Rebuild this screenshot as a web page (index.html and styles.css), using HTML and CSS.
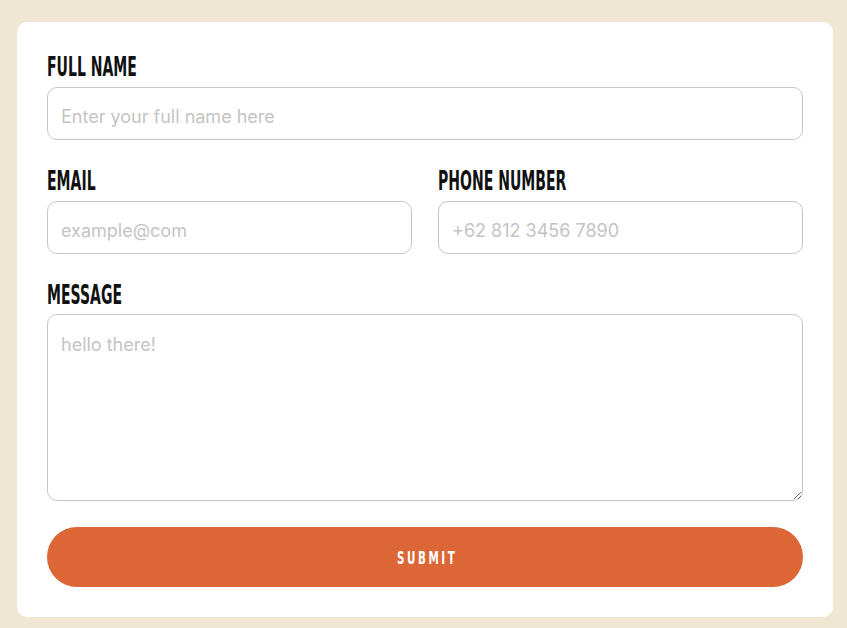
FILE: index.html
```html
<!DOCTYPE html>
<html lang="en">
<head>
    <meta charset="UTF-8">
    <meta name="viewport" content="width=device-width, initial-scale=1.0">
    <title>Contact Form</title>
    <link rel="stylesheet" href="styles.css">
</head>
<body>
    <div class="card">
        <form class="contact-form" onsubmit="return false;">
            <div class="field">
                <label for="fullName">Full Name</label>
                <input type="text" id="fullName" placeholder="Enter your full name here">
            </div>

            <div class="field-row">
                <div class="field">
                    <label for="email">Email</label>
                    <input type="text" id="email" placeholder="example@com">
                </div>
                <div class="field">
                    <label for="phone">Phone Number</label>
                    <input type="text" id="phone" placeholder="+62 812 3456 7890">
                </div>
            </div>

            <div class="field">
                <label for="message" class="message-label">Message</label>
                <textarea id="message" placeholder="hello there!"></textarea>
            </div>

            <button type="submit" class="submit-btn"><span>Submit</span></button>
        </form>
    </div>
</body>
</html>
```

FILE: styles.css
```css
/* Page */
body {
    margin: 0;
    padding: 22px 14px 11px 17px;
    background-color: #efe6d3;
    font-family: Inter, "Noto Sans", Arial, sans-serif;
}

.card {
    background-color: #fff;
    border-radius: 10px;
    padding: 30px;
}

.contact-form {
    display: flex;
    flex-direction: column;
    gap: 26px;
}

.field-row {
    display: grid;
    grid-template-columns: 1fr 1fr;
    gap: 26px;
}

/* Labels - condensed look, squeezed horizontally */
label {
    display: block;
    height: 30px;
    line-height: 30px;
    margin-bottom: 5px;
    font-family: "DejaVu Sans Condensed", "DejaVu Sans", sans-serif;
    font-weight: bold;
    font-size: 26px;
    text-transform: uppercase;
    color: #111;
    white-space: nowrap;
    transform: scaleX(0.6);
    transform-origin: left center;
}

.message-label {
    margin-bottom: 4px;
}

/* Inputs */
input, textarea {
    display: block;
    width: 100%;
    box-sizing: border-box;
    border: 1px solid #c6c6c6;
    border-radius: 10px;
    padding: 5px 13px 0;
    font-family: Inter, "Noto Sans", Arial, sans-serif;
    font-size: 18px;
    color: #333;
    background: #fff;
    outline: none;
}

input {
    height: 53px;
}

textarea {
    height: 187px;
    padding-top: 19px;
    resize: vertical;
}

input::placeholder, textarea::placeholder {
    color: #c4c4c4;
}

/* Button */
.submit-btn {
    height: 60px;
    border: none;
    border-radius: 30px;
    background-color: #dd6637;
    color: #fff;
    font-family: "DejaVu Sans Condensed", "DejaVu Sans", sans-serif;
    font-weight: bold;
    font-size: 18px;
    letter-spacing: 4px;
    text-transform: uppercase;
    cursor: pointer;
}

.submit-btn span {
    display: inline-block;
    margin-right: -4px; /* cancel trailing letter-spacing */
    transform: scaleX(0.64);
}
```
